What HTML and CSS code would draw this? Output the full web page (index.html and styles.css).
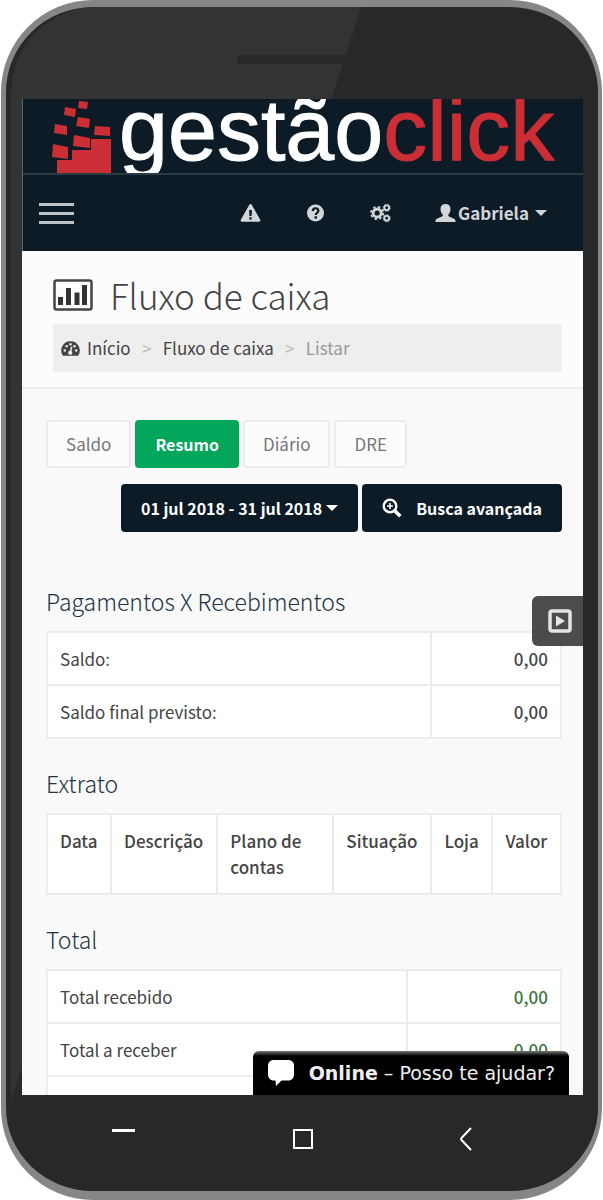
FILE: index.html
```html
<!DOCTYPE html>
<html lang="pt-BR">
<head>
    <meta charset="UTF-8">
    <meta name="viewport" content="width=device-width, initial-scale=1.0">
    <title>Fluxo de caixa - GestãoClick</title>
    <link rel="stylesheet" href="styles.css">
</head>
<body>
    <div class="phone">
        <div class="phone-top"><span class="speaker"></span></div>

        <div class="screen">
            <header>
                <div class="logo">
                    <svg class="logo-icon" viewBox="0 0 60 74" aria-hidden="true">
                        <path d="M27 2l9 1-1 7-9-1zM13 8l11 2-1 8-11-2zM26 18l12 2-1 9-13-2zM3 25l12 2v9L2 34zM43 27l15 1v9l-16-1zM22 36l16 3v10l-17-2zM1 45l15 3v12L0 58zM5 74V61h15V51h19V40h20v34z"/>
                    </svg>
                    <span class="logo-text">gestão<span class="logo-red">click</span></span>
                </div>
                <nav class="navbar">
                    <button class="menu" aria-label="Menu"><span></span><span></span><span></span></button>
                    <a href="#" class="nav-icon" aria-label="Alertas">
                        <svg viewBox="0 0 20 20"><path d="M8.800 1.700a1.400 1.400 0 0 1 2.400 0l8.500 15a1.300 1.300 0 0 1-1.200 2H1.500a1.300 1.300 0 0 1-1.200-2zM8.600 7l.3 6h2.200l.3-6zM8.800 14.300v2.200h2.400v-2.200z" fill-rule="evenodd"/></svg>
                    </a>
                    <a href="#" class="nav-icon" aria-label="Ajuda">
                        <svg viewBox="0 0 20 20"><circle cx="10" cy="10" r="8.500"/><path d="M7.300 8c0-3.700 5.600-3.500 5.600-.3 0 2-2.600 2.100-2.600 4.300" fill="none" stroke="#0d1b26" stroke-width="2.200"/><path d="M9 13.300h2.500v2.300H9z" fill="#0d1b26"/></svg>
                    </a>
                    <a href="#" class="nav-icon" aria-label="Configurações">
                        <svg viewBox="0 0 22 20">
                            <g fill="none" stroke="#d3d6d9">
                                <circle cx="7.500" cy="10" r="4.200" stroke-width="3"/>
                                <circle cx="7.500" cy="10" r="6.400" stroke-width="2" stroke-dasharray="2.500 2.530"/>
                                <circle cx="17.500" cy="4.500" r="2.500" stroke-width="2"/>
                                <circle cx="17.500" cy="4.500" r="3.700" stroke-width="1" stroke-dasharray="1.500 1.400"/>
                                <circle cx="17.500" cy="15.500" r="2.500" stroke-width="2"/>
                                <circle cx="17.500" cy="15.500" r="3.700" stroke-width="1" stroke-dasharray="1.500 1.400"/>
                            </g>
                        </svg>
                    </a>
                    <a href="#" class="user">
                        <svg viewBox="0 0 20 20"><path d="M10 1c3 0 5 1.800 5 5 0 2.500-1 4.600-2.200 5.600v1.500c1.500 1.400 7.200 2 7.200 4.900v1H0v-1c0-2.900 5.700-3.500 7.200-4.900v-1.500C6 10.600 5 8.500 5 6c0-3.200 2-5 5-5z"/></svg>
                        Gabriela
                        <span class="caret"></span>
                    </a>
                </nav>
            </header>

            <section class="page-header">
                <h1>
                    <svg viewBox="0 0 40 32" aria-hidden="true"><rect x="1.500" y="1.500" width="37" height="29" rx="2" fill="none" stroke="#444" stroke-width="2.500"/><path d="M5 18h5v8H5zM13 9h5v17h-5zM21.500 13.500h5V26h-5zM29 6h5v20h-5z" fill="#333"/></svg>
                    Fluxo de caixa
                </h1>
                <div class="breadcrumb">
                    <svg viewBox="0 0 20 17" aria-hidden="true"><path d="M10 1a9.500 9.500 0 0 0-8 15h16a9.500 9.500 0 0 0-8-15z" fill="#444"/><g fill="#eee"><circle cx="4" cy="10.500" r="1.300"/><circle cx="6" cy="6" r="1.300"/><circle cx="10" cy="4" r="1.300"/><circle cx="14.200" cy="6" r="1.300"/><circle cx="16" cy="10.500" r="1.300"/><path d="M10.500 6.500l1.500.4-1 4.300a2.200 2.200 0 1 1-1.600-.4z"/></g></svg>
                    <a href="#">Início</a>
                    <span class="sep">&gt;</span>
                    <a href="#">Fluxo de caixa</a>
                    <span class="sep">&gt;</span>
                    <span class="current">Listar</span>
                </div>
            </section>

            <main>
                <div class="tabs">
                    <button>Saldo</button>
                    <button class="active">Resumo</button>
                    <button>Diário</button>
                    <button>DRE</button>
                </div>
                <div class="filters">
                    <button>01 jul 2018 - 31 jul 2018 <span class="caret"></span></button>
                    <button class="search">
                        <svg viewBox="0 0 20 20" fill="none" stroke="#fff" aria-hidden="true"><circle cx="8" cy="8" r="6.300" stroke-width="2.400"/><path d="M12.800 12.800l5.500 5.500" stroke-width="3.600"/><path d="M8 5v6M5 8h6" stroke-width="1.600"/></svg>
                        Busca avançada
                    </button>
                </div>

                <h2>Pagamentos X Recebimentos</h2>
                <table class="resume">
                    <tr><td>Saldo:</td><td class="value">0,00</td></tr>
                    <tr><td>Saldo final previsto:</td><td class="value">0,00</td></tr>
                </table>

                <h2>Extrato</h2>
                <table class="extract">
                    <tr>
                        <th>Data</th>
                        <th>Descrição</th>
                        <th class="plan">Plano de contas</th>
                        <th>Situação</th>
                        <th>Loja</th>
                        <th>Valor</th>
                    </tr>
                </table>

                <h2>Total</h2>
                <table class="total">
                    <tr><td>Total recebido</td><td class="value green">0,00</td></tr>
                    <tr><td>Total a receber</td><td class="value green">0,00</td></tr>
                    <tr><td></td><td></td></tr>
                </table>
            </main>

            <button class="video" aria-label="Vídeo">
                <svg viewBox="0 0 24 24"><rect x="2" y="2" width="20" height="20" rx="2" fill="none" stroke="#e4e4e4" stroke-width="3.500"/><path d="M8 6.500l9 5.500-9 5.500z" fill="#e4e4e4"/></svg>
            </button>
            <button class="chat">
                <svg viewBox="0 0 28 28" aria-hidden="true"><path d="M7 1h14c4 0 6 2.500 6 6v8c0 4-2 6.500-6 6.500h-6.500L9 27l-.5-5.500H7c-4 0-6-2.500-6-6.500V7c0-3.500 2-6 6-6z" fill="#fff"/></svg>
                <span><b>Online</b> – Posso te ajudar?</span>
            </button>
        </div>

        <div class="phone-bottom">
            <svg viewBox="0 0 36 24"><path d="M6 3.500h23" stroke-width="3"/></svg>
            <svg viewBox="0 0 36 24"><rect x="14" y="3" width="18" height="18" stroke-width="2"/></svg>
            <svg viewBox="0 0 36 24"><path d="M17 1L7.500 11q-1 1 0 2L17 23" stroke-width="2"/></svg>
        </div>
    </div>
</body>
</html>
```
FILE: styles.css
```css
* {
    box-sizing: border-box;
}

body {
    margin: 0;
    background: #fff;
    font-family: "Noto Sans CJK SC", "Noto Sans", sans-serif;
    font-size: 17px;
    line-height: 26px;
    color: #444;
}

button {
    font: inherit;
    border: none;
    cursor: pointer;
}

a {
    color: inherit;
    text-decoration: none;
}

/* aparelho */
.phone {
    display: flex;
    flex-direction: column;
    position: relative;
    height: 100vh;
    margin: 0 1px;
    padding: 0 15px 0 16px;
    background: #282828;
    border: solid #858688;
    border-width: 7px 4px 9px 5px;
    border-radius: 92px;
}

.phone::before {
    content: "";
    position: absolute;
    top: 0;
    left: 5px;
    right: 0;
    bottom: 0;
    border-radius: 86px 0 0 0;
    background: #323433;
    clip-path: polygon(0 0, 350px 0, 0 1094px);
}

.phone-top {
    position: relative;
    flex: none;
    height: 92px;
}

.speaker {
    position: absolute;
    top: 48px;
    left: 215px;
    width: 120px;
    height: 9px;
    border-radius: 5px;
    background: #282828;
}

.phone-bottom {
    flex: none;
    display: flex;
    justify-content: space-between;
    align-items: center;
    height: 96px;
    padding: 0 93px 8px 84px;
}

.phone-bottom svg {
    width: 36px;
    height: 24px;
    fill: none;
    stroke: #fff;
}

.screen {
    position: relative;
    flex: 1;
    min-height: 0;
    overflow: hidden;
    background: #f9f9f9;
}

/* topo */
header {
    background: #0d1b26;
    color: #d3d6d9;
    border-left: 1px solid #59636b;
}

.logo {
    display: flex;
    height: 76px;
    overflow: hidden;
    padding-left: 29px;
    border-bottom: 2px solid #2c3b42;
}

.logo-icon {
    flex: none;
    width: 60px;
    height: 74px;
    margin-right: 7px;
    fill: #cb2f35;
}

.logo-text {
    font-family: "Liberation Sans", Arial, sans-serif;
    font-size: 88px;
    line-height: 62px;
    color: #fff;
    white-space: nowrap;
    -webkit-text-stroke: 1px currentColor;
}

.logo-red {
    color: #cb2f35;
}

.navbar {
    display: flex;
    align-items: center;
    height: 76px;
    padding: 0 36px 0 16px;
    font-weight: bold;
}

.menu {
    display: flex;
    flex-direction: column;
    gap: 6px;
    margin-right: auto;
    padding: 0;
    background: none;
}

.menu span {
    width: 35px;
    height: 3px;
    background: #bfc3c6;
}

.nav-icon {
    display: flex;
    margin-right: 44px;
}

.nav-icon svg,
.user svg {
    width: 21px;
    height: 20px;
    fill: #d3d6d9;
}

.user {
    display: flex;
    align-items: center;
    gap: 2px;
}

.caret {
    display: inline-block;
    margin-left: 4px;
    border: 6px solid transparent;
    border-top-color: currentColor;
    border-bottom: none;
    vertical-align: middle;
}

/* titulo da pagina */
.page-header {
    padding: 23px 21px 15px 31px;
    background: #fcfcfc;
    border-bottom: 2px solid #ececec;
}

h1 {
    display: flex;
    align-items: center;
    gap: 17px;
    margin: 0;
    font-size: 35px;
    font-weight: 300;
    line-height: 42px;
}

h1 svg {
    width: 40px;
    height: 32px;
}

.breadcrumb {
    display: flex;
    align-items: center;
    height: 48px;
    margin-top: 8px;
    padding-left: 8px;
    background: #eee;
    border-radius: 3px;
}

.breadcrumb svg {
    width: 19px;
    height: 17px;
    margin-right: 7px;
}

.sep {
    width: 32px;
    text-align: center;
    color: #bbb;
}

.current {
    color: #999;
}

/* conteudo */
main {
    padding: 31px 21px 0 24px;
}

.tabs {
    display: flex;
    gap: 4px;
}

.tabs button {
    height: 48px;
    padding: 0 18px;
    background: #fcfcfc;
    border: 2px solid #ebebeb;
    border-radius: 4px;
    color: #777;
}

.tabs .active {
    background: #00a65a;
    border-color: #00a65a;
    color: #fff;
    font-size: 16px;
    font-weight: bold;
}

.filters {
    display: flex;
    justify-content: flex-end;
    gap: 4px;
    margin-top: 16px;
}

.filters button {
    display: flex;
    align-items: center;
    height: 48px;
    padding: 0 20px;
    background: #0d1b26;
    border-radius: 4px;
    color: #fff;
    font-size: 16px;
    font-weight: bold;
}

.filters svg {
    width: 20px;
    height: 20px;
    margin-right: 14px;
}

h2 {
    margin: 0 0 14px;
    font-size: 23px;
    font-weight: 300;
    line-height: 32px;
    color: #22333f;
}

.filters + h2 {
    margin-top: 53px;
}

table {
    width: 100%;
    margin-bottom: 28px;
    border-collapse: collapse;
    background: #fff;
}

td,
th {
    height: 53px;
    padding: 0 12px;
    border: 2px solid #ececec;
    text-align: left;
    font-weight: 400;
}

.value {
    text-align: right;
    font-weight: 500;
}

.resume .value {
    width: 130px;
}

.total .value {
    width: 154px;
}

.green {
    color: #3c763d;
}

th {
    height: 78px;
    padding: 13px 12px;
    vertical-align: top;
    font-weight: 500;
}

.plan {
    width: 116px;
}

/* botoes flutuantes */
.video {
    position: absolute;
    top: 497px;
    right: 0;
    display: flex;
    align-items: center;
    justify-content: center;
    width: 51px;
    height: 50px;
    padding: 0 0 0 4px;
    background: rgba(51, 51, 51, 0.88);
    border-radius: 6px 0 0 6px;
}

.video svg {
    width: 24px;
    height: 24px;
}

.chat {
    position: absolute;
    right: 14px;
    bottom: 0;
    display: flex;
    align-items: center;
    gap: 14px;
    height: 44px;
    padding: 0 14px;
    background: linear-gradient(#777, #000 5px);
    border-radius: 6px 6px 0 0;
    color: #eee;
    font-family: "DejaVu Sans", sans-serif;
    font-size: 19px;
    white-space: nowrap;
}

.chat svg {
    width: 28px;
    height: 28px;
}
```
